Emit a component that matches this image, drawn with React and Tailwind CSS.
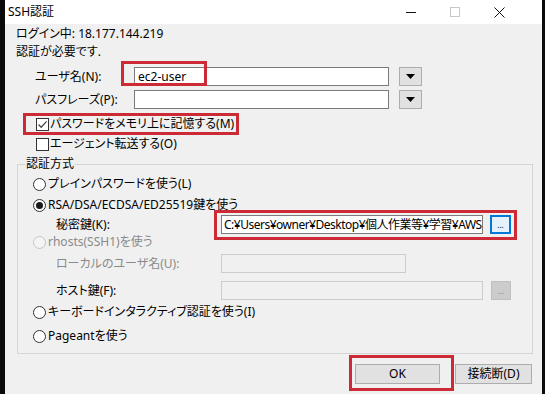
import React from "react";

function Highlight({ className }) {
  return <div className={`pointer-events-none absolute border-[3px] border-[#cc2b36] ${className}`} />;
}

function CheckBox({ checked }) {
  return (
    <span className="flex h-[13px] w-[13px] shrink-0 items-center justify-center border border-[#333333] bg-white">
      {checked ? (
        <svg width="11" height="11" viewBox="0 0 11 11">
          <path d="M1.5 5.5 L4.2 8.3 L9.6 2.4" fill="none" stroke="#4a4a4a" strokeWidth="1.3" />
        </svg>
      ) : null}
    </span>
  );
}

function Radio({ checked, disabled }) {
  return (
    <span
      className={
        disabled
          ? "flex h-[13px] w-[13px] shrink-0 items-center justify-center rounded-full border border-[#c4c4c4] bg-[#f4f4f4]"
          : "flex h-[13px] w-[13px] shrink-0 items-center justify-center rounded-full border border-[#333333] bg-white"
      }
    >
      {checked ? <span className="h-[7px] w-[7px] rounded-full bg-[#1a1a1a]" /> : null}
    </span>
  );
}

function DropButton() {
  return (
    <div className="flex h-[19px] w-[23px] items-center justify-center border border-[#adadad] bg-[#e1e1e1]">
      <svg width="9" height="5" viewBox="0 0 9 5">
        <path d="M0 0H9L4.5 5Z" fill="#000" />
      </svg>
    </div>
  );
}

function RadioRow({ checked, disabled, label, className = "" }) {
  return (
    <div className={`flex h-[16px] items-center gap-[2px] ${className}`}>
      <Radio checked={checked} disabled={disabled} />
      <span className={disabled ? "text-[#8a8a8a]" : "text-black"}>{label}</span>
    </div>
  );
}

export default function App() {
  return (
    <div className="flex h-[394px] w-[545px] overflow-hidden bg-black font-['Noto_Sans','Noto_Sans_CJK_JP',sans-serif] text-[12px] leading-[16px] text-black [font-feature-settings:'palt']">
      <div className="w-[5px] shrink-0 bg-[#0a0a0a]" />
      <div className="flex w-[537px] shrink-0 flex-col">
        {/* title bar */}
        <div className="flex h-[24px] items-center bg-white">
          <span className="pl-[3px]">SSH認証</span>
          <div className="ml-auto flex h-full pr-[21px]">
            <div className="flex w-[44px] items-center justify-center">
              <span className="h-px w-[10px] bg-[#111]" />
            </div>
            <div className="flex w-[44px] items-center justify-center">
              <span className="h-[10px] w-[10px] border border-[#c8c8c8]" />
            </div>
            <div className="flex w-[44px] items-center justify-center">
              <svg width="11" height="11" viewBox="0 0 11 11">
                <path d="M0.5 0.5L10.5 10.5M10.5 0.5L0.5 10.5" stroke="#111" strokeWidth="1" />
              </svg>
            </div>
          </div>
        </div>

        {/* body */}
        <div className="flex flex-1 flex-col bg-[#f0f0f0] pl-[11px] pt-[2px]">
          <div className="h-[16px]">ログイン中: 18.177.144.219</div>
          <div className="mt-[2px] h-[16px]">認証が必要です.</div>

          <div className="ml-[19px] mt-[7px] flex h-[19px] items-center">
            <span className="w-[99px]">ユーザ名(N):</span>
            <div className="relative">
              <div className="flex h-[19px] w-[255px] items-center border border-[#7a7a7a] bg-white pl-[3px]">ec2-user</div>
              <Highlight className="-left-[13px] -top-[6px] h-[25px] w-[86px]" />
            </div>
            <div className="ml-[10px]">
              <DropButton />
            </div>
          </div>

          <div className="ml-[19px] mt-[4px] flex h-[19px] items-center">
            <span className="w-[99px]">パスフレーズ(P):</span>
            <div className="h-[19px] w-[255px] border border-[#7a7a7a] bg-white" />
            <div className="ml-[10px]">
              <DropButton />
            </div>
          </div>

          <div className="relative ml-[20px] mt-[7px] flex h-[16px] items-center gap-[1px]">
            <CheckBox checked />
            <span>パスワードをメモリ上に記憶する(M)</span>
            <Highlight className="-left-[13px] -top-[3px] h-[22px] w-[216px]" />
          </div>
          <div className="ml-[20px] mt-[4px] flex h-[16px] items-center gap-[1px]">
            <CheckBox />
            <span>エージェント転送する(O)</span>
          </div>

          <fieldset className="ml-[1px] mt-[4px] w-[516px] border border-[#d5d5d5] pb-[9px]">
            <legend className="ml-[7px] px-[1px] leading-[16px]">認証方式</legend>
            <div className="flex flex-col pl-[15px]">
              <RadioRow className="mt-[4px]" label="プレインパスワードを使う(L)" />
              <RadioRow className="mt-[5px]" checked label="RSA/DSA/ECDSA/ED25519鍵を使う" />

              <div className="mt-[2px] flex h-[19px] items-center">
                <span className="w-[188px] pl-[23px]">秘密鍵(K):</span>
                <div className="relative">
                  <div className="flex h-[19px] w-[262px] items-center overflow-hidden whitespace-nowrap border border-[#7a7a7a] bg-white pl-[2px] tracking-[-0.5px]">
                    C:¥Users¥owner¥Desktop¥個人作業等¥学習¥AWS
                  </div>
                  <Highlight className="-left-[7px] -top-[5px] h-[30px] w-[303px]" />
                </div>
                <div className="ml-[7px] flex h-[19px] w-[21px] items-center justify-center border-2 border-[#0078d7] bg-[#e5f1fb] text-[8px] leading-[8px]">
                  …
                </div>
              </div>

              <RadioRow disabled label="rhosts(SSH1)を使う" />

              <div className="mt-[4px] flex h-[19px] items-center">
                <span className="w-[188px] pl-[23px] text-[#8a8a8a]">ローカルのユーザ名(U):</span>
                <div className="h-[19px] w-[185px] border border-[#cccccc] bg-[#f0f0f0]" />
              </div>

              <div className="mt-[8px] flex h-[19px] items-center">
                <span className="w-[188px] pl-[23px]">ホスト鍵(F):</span>
                <div className="h-[19px] w-[262px] border border-[#cccccc] bg-[#f0f0f0]" />
                <div className="ml-[8px] flex h-[19px] w-[20px] items-center justify-center border border-[#bfbfbf] bg-[#cccccc] text-[8px] leading-[8px] text-[#8a8a8a]">
                  …
                </div>
              </div>

              <RadioRow className="mt-[4px]" label="キーボードインタラクティブ認証を使う(I)" />
              <RadioRow className="mt-[8px]" label="Pageantを使う" />
            </div>
          </fieldset>

          <div className="mt-[10px] flex justify-end gap-[15px] pr-[10px]">
            <div className="relative">
              <div className="flex h-[20px] w-[85px] items-center justify-center border border-[#adadad] bg-[#e1e1e1]">OK</div>
              <Highlight className="-left-[6px] -top-[9px] h-[36px] w-[105px]" />
            </div>
            <div className="flex h-[20px] w-[77px] items-center justify-center border border-[#adadad] bg-[#e1e1e1]">接続断(D)</div>
          </div>
        </div>
      </div>
      <div className="w-[3px] shrink-0 bg-[#0a0a0a]" />
    </div>
  );
}
